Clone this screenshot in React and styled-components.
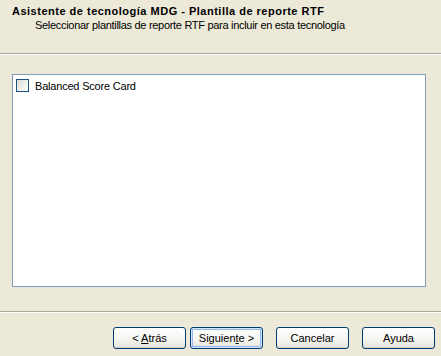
import React from "react";
import styled, { createGlobalStyle } from "styled-components";

const Global = createGlobalStyle`
  html, body { margin: 0; padding: 0; background: #ECE9D8; }
  body { font-family: "Liberation Sans", Arial, sans-serif; font-size: 11px; color: #000; }
`;

const Dialog = styled.div`
  width: 441px;
  height: 356px;
  display: flex;
  flex-direction: column;
  background: #ECE9D8;
  overflow: hidden;
`;

const Header = styled.div`
  height: 53px;
  box-sizing: border-box;
  padding: 5px 0 0 12px;
`;

const Title = styled.div`
  font-weight: bold;
  font-size: 11px;
  line-height: 13px;
  letter-spacing: 0.5px;
`;

const Subtitle = styled.div`
  margin-left: 23px;
  font-size: 11px;
  line-height: 13px;
  margin-top: 1px;
  letter-spacing: -0.3px;
`;

const Separator = styled.div`
  height: 0;
  border-top: 1px solid #ACA899;
  border-bottom: 1px solid #FFFFFF;
`;

const Body = styled.div`
  padding: 19px 15px 0 12px;
  height: 256px;
  box-sizing: border-box;
`;

const ListBox = styled.div`
  height: 213px;
  box-sizing: border-box;
  border: 1px solid #7F9DB9;
  background: #fff;
  padding: 3px 3px;
`;

const Item = styled.label`
  display: flex;
  align-items: center;
  gap: 6px;
  height: 15px;
`;

const Box = styled.span`
  width: 13px;
  height: 13px;
  box-sizing: border-box;
  border: 1px solid #1C5180;
  background: linear-gradient(135deg, #DCDCD7 0%, #F5F5F2 70%, #FFFFFF 100%);
  flex: none;
`;

const ItemText = styled.span`
  letter-spacing: -0.2px;
`;

const Footer = styled.div`
  display: flex;
  justify-content: flex-end;
  padding: 14px 6px 0 0;
`;

const Button = styled.button`
  width: 73px;
  height: 22px;
  margin-left: ${(p) => p.$gap}px;
  box-sizing: border-box;
  border: 1px solid #003C74;
  border-radius: 3px;
  background: linear-gradient(180deg, #FFFFFF 0%, #F4F4F0 60%, #E3E2DA 100%);
  font-family: "Liberation Sans", Arial, sans-serif;
  font-size: 11px;
  color: #000;
  padding: 0;
  box-shadow: ${(p) =>
    p.$default
      ? "inset 0 0 0 1px #CEE7FF, inset 0 0 0 2px #98B8EA"
      : "inset 0 -1px 0 #D6D0C5"};
  u { text-decoration: underline; }
`;

export default function App() {
  return (
    <>
      <Global />
      <Dialog>
        <Header>
          <Title>Asistente de tecnología MDG - Plantilla de reporte RTF</Title>
          <Subtitle>Seleccionar plantillas de reporte RTF para incluir en esta tecnología</Subtitle>
        </Header>
        <Separator />
        <Body>
          <ListBox>
            <Item>
              <Box />
              <ItemText>Balanced Score Card</ItemText>
            </Item>
          </ListBox>
        </Body>
        <Separator />
        <Footer>
          <Button $gap={0}>&lt; <u>A</u>trás</Button>
          <Button $gap={4} $default>Siguien<u>t</u>e &gt;</Button>
          <Button $gap={13}>Cancelar</Button>
          <Button $gap={13}>Ayuda</Button>
        </Footer>
      </Dialog>
    </>
  );
}
